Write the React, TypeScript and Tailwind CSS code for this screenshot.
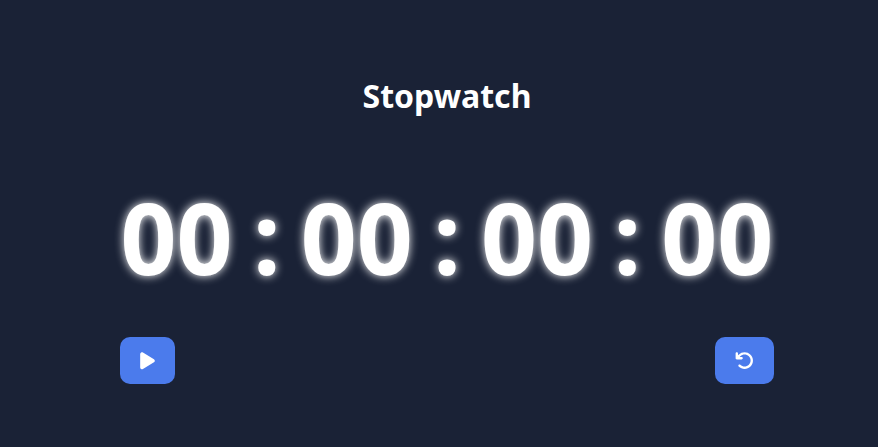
import { FaPlay, FaArrowRotateLeft } from "react-icons/fa6";

const parts = ["00", "00", "00", "00"];

export default function App() {
  return (
    <main className="flex h-screen flex-col items-center bg-[#1a2236] pl-4 font-['Noto_Sans',sans-serif] text-white">
      <h1 className="mt-[72px] text-[32px] leading-12 font-bold">Stopwatch</h1>
      <div className="mt-[49px] flex h-[136px] w-[653px] items-center justify-between text-[98px] leading-[136px] font-bold [text-shadow:0_0_10px_#fff]">
        {parts.map((part, i) => (
          <div key={i} className="contents">
            {i > 0 && <span>:</span>}
            <span>{part}</span>
          </div>
        ))}
      </div>
      <div className="mt-8 flex w-[654px] justify-between">
        <button aria-label="Start" className="flex h-[47px] w-[55px] items-center justify-center rounded-[10px] bg-[#4b7bec]">
          <FaPlay className="h-[19.5px] w-[15px]" />
        </button>
        <button aria-label="Reset" className="flex h-[47px] w-[59px] items-center justify-center rounded-[10px] bg-[#4b7bec]">
          <FaArrowRotateLeft className="size-[19.2px]" />
        </button>
      </div>
    </main>
  );
}
